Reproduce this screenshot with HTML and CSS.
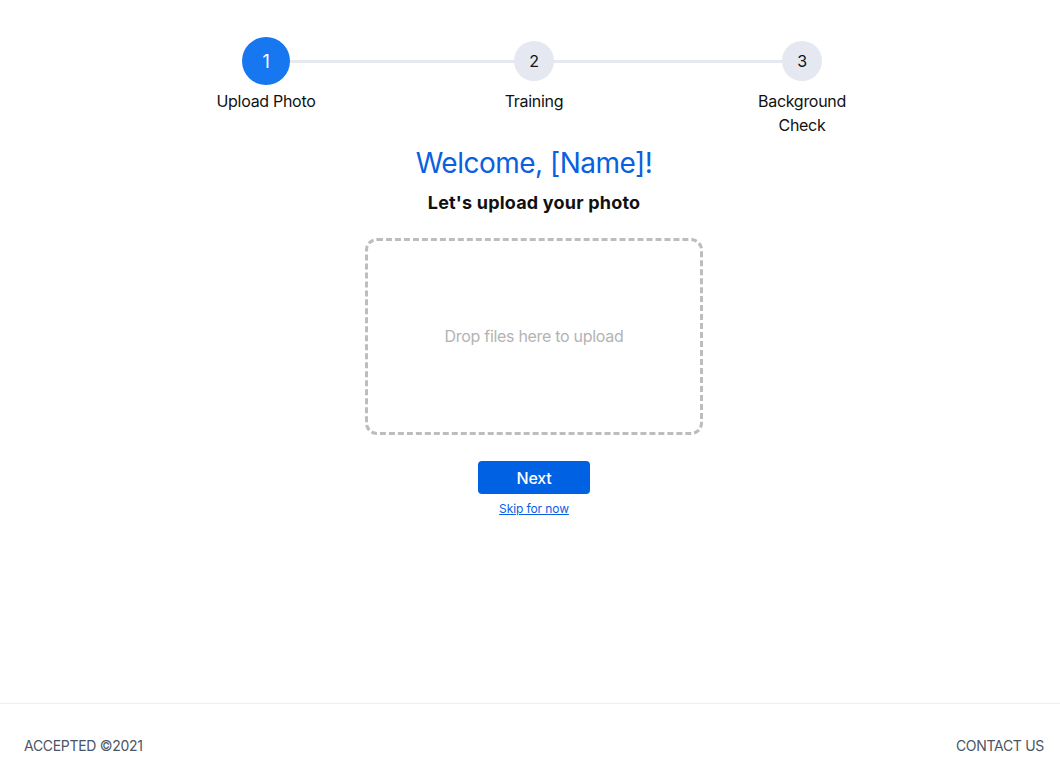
FILE: index.html
```html
<!DOCTYPE html>
<html lang="en">
<head>
<meta charset="utf-8">
<title>Onboarding</title>
<link rel="stylesheet" href="styles.css">
</head>
<body>
<div class="page">
  <main class="main">
    <div class="stepper">
      <div class="step-line"></div>
      <div class="step active">
        <div class="dot-wrap"><span class="dot">1</span></div>
        <div class="label">Upload Photo</div>
      </div>
      <div class="step">
        <div class="dot-wrap"><span class="dot">2</span></div>
        <div class="label">Training</div>
      </div>
      <div class="step">
        <div class="dot-wrap"><span class="dot">3</span></div>
        <div class="label">Background Check</div>
      </div>
    </div>
    <h1 class="title">Welcome, [Name]!</h1>
    <h2 class="subtitle">Let's upload your photo</h2>
    <div class="dropzone">Drop files here to upload</div>
    <button class="next" type="button">Next</button>
    <a class="skip" href="#">Skip for now</a>
  </main>
  <footer class="footer">
    <span>ACCEPTED ©2021</span>
    <span>CONTACT US</span>
  </footer>
</div>
</body>
</html>
```
FILE: styles.css
```css
html, body {
  margin: 0;
  padding: 0;
  overflow: hidden;
  background: #fff;
}
body {
  font-family: Inter, "Liberation Sans", Arial, sans-serif;
  color: #111;
  letter-spacing: -0.3px;
}
.page {
  width: 1068px;
}
.main {
  min-height: 703px;
  display: flex;
  flex-direction: column;
  align-items: center;
  padding-top: 37px;
  box-sizing: border-box;
}
.stepper {
  position: relative;
  display: grid;
  grid-template-columns: repeat(3, 268px);
}
.step-line {
  position: absolute;
  left: 134px;
  right: 134px;
  top: 23px;
  height: 3px;
  background: #e6e9f0;
}
.step {
  position: relative;
  display: flex;
  flex-direction: column;
  align-items: center;
}
.dot-wrap {
  height: 48px;
  display: flex;
  align-items: center;
  justify-content: center;
}
.dot {
  width: 40px;
  height: 40px;
  border-radius: 50%;
  background: #e5e8f0;
  color: #111;
  display: flex;
  align-items: center;
  justify-content: center;
  font-size: 16px;
}
.step.active .dot {
  width: 48px;
  height: 48px;
  background: #1677f0;
  color: #fff;
  font-size: 18px;
}
.label {
  margin-top: 4px;
  font-size: 16px;
  line-height: 24px;
  max-width: 120px;
  text-align: center;
}
.title {
  margin: 8px 0 0;
  font-size: 28px;
  line-height: 36px;
  font-weight: 400;
  letter-spacing: -0.5px;
  color: #0a60e0;
}
.subtitle {
  margin: 8px 0 0;
  font-size: 18px;
  line-height: 28px;
  font-weight: 700;
  letter-spacing: 0.2px;
}
.dropzone {
  margin-top: 21px;
  width: 338px;
  height: 197px;
  box-sizing: border-box;
  border: 3px dashed #bdbdbd;
  border-radius: 12px;
  display: flex;
  align-items: center;
  justify-content: center;
  color: #b3b3b3;
  font-size: 16px;
  padding-bottom: 2px;
}
.next {
  margin-top: 26px;
  width: 112px;
  height: 33px;
  border: 0;
  border-radius: 4px;
  background: #0061e3;
  color: #fff;
  font-family: inherit;
  font-size: 16px;
  font-weight: 500;
  letter-spacing: -0.2px;
}
.skip {
  margin-top: 7px;
  font-size: 12px;
  line-height: 16px;
  color: #0a60e0;
  text-decoration: underline;
  letter-spacing: -0.1px;
}
.footer {
  border-top: 1px solid #eeeeee;
  display: flex;
  justify-content: space-between;
  padding: 32px 24px 31px;
  font-size: 14px;
  line-height: 20px;
  color: #4b5563;
}
```
